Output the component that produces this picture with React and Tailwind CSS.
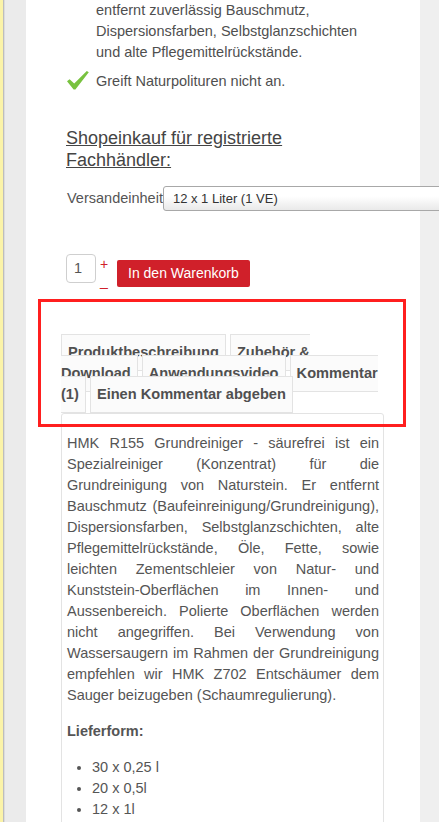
import { useState } from "react";

const beschreibung = [
  "HMK R155 Grundreiniger - säurefrei ist ein",
  "Spezialreiniger (Konzentrat) für die",
  "Grundreinigung von Naturstein. Er entfernt",
  "Bauschmutz (Baufeinreinigung/Grundreinigung),",
  "Dispersionsfarben, Selbstglanzschichten, alte",
  "Pflegemittelrückstände, Öle, Fette, sowie",
  "leichten Zementschleier von Natur- und",
  "Kunststein-Oberflächen im Innen- und",
  "Aussenbereich. Polierte Oberflächen werden",
  "nicht angegriffen. Bei Verwendung von",
  "Wassersaugern im Rahmen der Grundreinigung",
  "empfehlen wir HMK Z702 Entschäumer dem",
];

const tabs = [
  "Produktbeschreibung",
  "Zubehör & Download",
  "Anwendungsvideo",
  "Kommentar (1)",
  "Einen Kommentar abgeben",
];

function Haken() {
  return (
    <svg width="22" height="19" viewBox="0 0 22 19">
      <path
        d="M0 10.2 L2.6 8.2 L7.2 12.6 L19.8 0 L21.8 1.2 L8.4 18.6 L6.6 18.6 Z"
        fill="#78c23f"
      />
    </svg>
  );
}

export default function App() {
  const [menge, setMenge] = useState(1);

  return (
    <div
      className="relative flex h-[822px] overflow-hidden bg-[#efefef] text-[#555]"
      style={{ fontFamily: '"Liberation Sans", Arial, sans-serif' }}
    >
      <div className="w-[3px] shrink-0 bg-[#fbf3a8]" />
      <div className="w-[1px] shrink-0 bg-[#bdbdbd]" />
      <div className="w-[1px] shrink-0 bg-[#dcdcdc]" />
      <div className="w-[21px] shrink-0 bg-[#ebebeb]" />

      <main className="w-[394px] shrink-0 bg-white pl-[35px] pr-[36px]">
        <ul className="text-[14.5px] leading-[21px] text-[#4f4f4f]">
          <li className="pl-[35px]">
            entfernt zuverlässig Bauschmutz,
            <br />
            Dispersionsfarben, Selbstglanzschichten
            <br />
            und alte Pflegemittelrückstände.
          </li>
          <li className="mt-[8px] flex items-start">
            <span className="ml-[6px] w-[29px] shrink-0">
              <Haken />
            </span>
            <span>Greift Naturpolituren nicht an.</span>
          </li>
        </ul>

        <h3 className="ml-[5px] mt-[35px] text-[18px] leading-[22px] text-[#444] underline">
          Shopeinkauf für registrierte
          <br />
          Fachhändler:
        </h3>

        <div className="ml-[6px] mt-[15px] flex h-[25px] items-center text-[14.5px]">
          <span>Versandeinheit</span>
          <div className="h-[25px] w-[300px] shrink-0 rounded-[3px] border border-[#a8a8a8] bg-linear-to-b from-white from-40% to-[#e9e9e9] pl-[9px] text-[13px] leading-[23px] text-[#333]">
            12 x 1 Liter (1 VE)
          </div>
        </div>

        <div className="ml-[5px] mt-[43px] flex h-[33px] items-start">
          <div className="flex h-[29px] w-[30px] items-center rounded-[4px] border border-[#cfcfcf] pl-[7px] text-[14.5px] text-[#555]">
            {menge}
          </div>
          <div className="ml-[4px] flex w-[8px] flex-col text-[14px] text-[#d0202a]">
            <button
              className="mt-[2px] h-[16px] leading-[16px]"
              onClick={() => setMenge(menge + 1)}
            >
              +
            </button>
            <button
              className="mt-[2px] h-[14px] leading-[14px]"
              onClick={() => setMenge(Math.max(1, menge - 1))}
            >
              _
            </button>
          </div>
          <button className="ml-[9px] mt-[6px] h-[27px] rounded-[2px] bg-[#d0202a] px-[11px] text-[14px] text-white">
            In den Warenkorb
          </button>
        </div>

        <div className="mt-[55px] w-[323px] text-[14.6px] font-bold leading-[21px] text-[#505050]">
          {tabs.map((t, i) => (
            <span key={t}>
              <a className="border border-[#e3e3e3] bg-[#fbfbfb] px-[6px] pt-[9px] pb-[10px]">
                {t}
              </a>
              {i < tabs.length - 1 ? " " : ""}
            </span>
          ))}
        </div>

        <div className="mt-[8px] w-[323px] rounded-[3px] border border-[#e3e3e3] pb-[30px] pl-[5px] pr-[4px] pt-[19px] text-[14.5px] leading-[21px] text-[#555]">
          {beschreibung.map((z) => (
            <div key={z} className="text-justify [text-align-last:justify]">
              {z}
            </div>
          ))}
          <div>Sauger beizugeben (Schaumregulierung).</div>

          <p className="mt-[15px] font-bold">Lieferform:</p>

          <ul className="mt-[15px] list-disc pl-[25px]">
            <li>30 x 0,25 l</li>
            <li>20 x 0,5l</li>
            <li>12 x 1l</li>
          </ul>
        </div>
      </main>

      <div className="pointer-events-none absolute left-[38px] top-[299px] h-[128px] w-[368px] border-[3px] border-[#ff1f1f]" />
    </div>
  );
}
